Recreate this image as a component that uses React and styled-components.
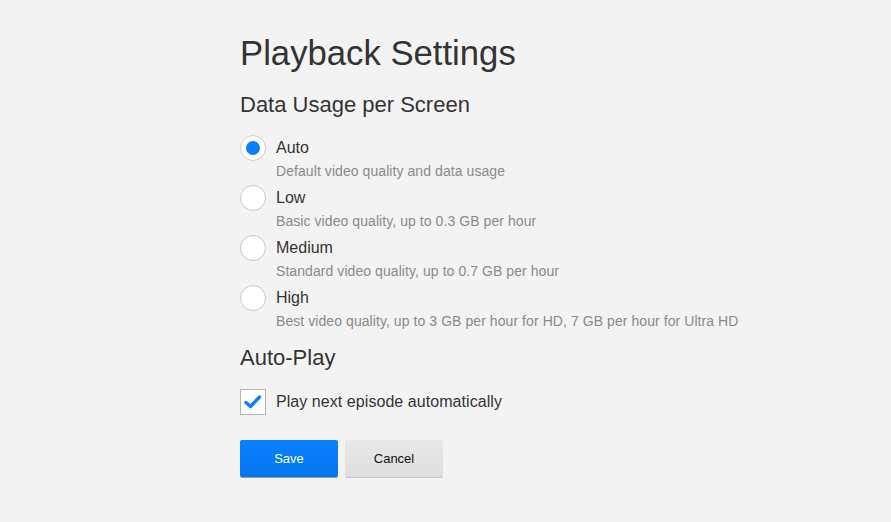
import React, { useState } from "react";
import styled, { createGlobalStyle } from "styled-components";

const Global = createGlobalStyle`
  html, body {
    margin: 0;
    padding: 0;
    background: #f3f3f3;
  }
  body {
    font-family: "Liberation Sans", Arial, sans-serif;
    color: #333;
  }
`;

const Page = styled.div`
  min-height: 522px;
  box-sizing: border-box;
  padding: 32px 0 0 240px;
  display: flex;
  flex-direction: column;
  align-items: flex-start;
`;

const Title = styled.h1`
  margin: 0 0 18px;
  font-size: 34.7px;
  line-height: 42px;
  font-weight: 400;
  color: #333;
`;

const SectionTitle = styled.h2`
  margin: ${(p) => p.$top || 0}px 0 ${(p) => p.$bottom || 0}px;
  font-size: 22px;
  line-height: 26px;
  font-weight: 400;
  color: #333;
`;

const OptionList = styled.div`
  display: flex;
  flex-direction: column;
  gap: 4px;
`;

const Option = styled.label`
  display: grid;
  grid-template-columns: 26px auto;
  column-gap: 10px;
  cursor: pointer;
`;

const Radio = styled.span`
  width: 26px;
  height: 26px;
  box-sizing: border-box;
  border-radius: 50%;
  background: #fff;
  border: 1px solid ${(p) => (p.$checked ? "#d6cbcb" : "#c8c8c8")};
  display: flex;
  align-items: center;
  justify-content: center;
  &::after {
    content: "";
    width: 14px;
    height: 14px;
    border-radius: 50%;
    background: ${(p) => (p.$checked ? "#0a80ff" : "transparent")};
  }
`;

const OptionText = styled.div`
  display: flex;
  flex-direction: column;
`;

const OptionLabel = styled.span`
  font-size: 16px;
  line-height: 26px;
  color: #333;
`;

const OptionDesc = styled.span`
  font-size: 14px;
  line-height: 20px;
  letter-spacing: 0.07px;
  color: #8a8a8a;
  white-space: nowrap;
`;

const CheckRow = styled.label`
  display: flex;
  align-items: center;
  gap: 10px;
  cursor: pointer;
`;

const CheckBox = styled.span`
  width: 26px;
  height: 26px;
  box-sizing: border-box;
  background: #fff;
  border: 1px solid #b5b5b5;
  display: flex;
  align-items: center;
  justify-content: center;
`;

const CheckText = styled.span`
  font-size: 16px;
  line-height: 26px;
  letter-spacing: 0.06px;
  color: #333;
`;

const Actions = styled.div`
  display: flex;
  gap: 7px;
  margin-top: 25px;
`;

const Button = styled.button`
  width: 98px;
  height: 37px;
  border: none;
  border-radius: 2px;
  font-family: "Liberation Sans", Arial, sans-serif;
  font-size: 13px;
  cursor: pointer;
  color: ${(p) => (p.$primary ? "#fff" : "#111")};
  background: ${(p) =>
    p.$primary
      ? "linear-gradient(#0a80ff, #0377ec)"
      : "linear-gradient(#e8e8e8, #dedede)"};
  box-shadow: 0 1px 0 rgba(0, 0, 0, ${(p) => (p.$primary ? 0.35 : 0.18)});
`;

const options = [
  { id: "auto", label: "Auto", desc: "Default video quality and data usage" },
  { id: "low", label: "Low", desc: "Basic video quality, up to 0.3 GB per hour" },
  { id: "medium", label: "Medium", desc: "Standard video quality, up to 0.7 GB per hour" },
  {
    id: "high",
    label: "High",
    desc: "Best video quality, up to 3 GB per hour for HD, 7 GB per hour for Ultra HD",
  },
];

export default function App() {
  const [sel, setSel] = useState("auto");
  const [auto, setAuto] = useState(true);
  return (
    <>
      <Global />
      <Page>
        <Title>Playback Settings</Title>
        <SectionTitle $bottom={17}>Data Usage per Screen</SectionTitle>
        <OptionList>
          {options.map((o) => (
            <Option key={o.id} onClick={() => setSel(o.id)}>
              <Radio $checked={sel === o.id} />
              <OptionText>
                <OptionLabel>{o.label}</OptionLabel>
                <OptionDesc>{o.desc}</OptionDesc>
              </OptionText>
            </Option>
          ))}
        </OptionList>
        <SectionTitle $top={14} $bottom={18}>Auto-Play</SectionTitle>
        <CheckRow onClick={() => setAuto(!auto)}>
          <CheckBox>
            {auto && (
              <svg width="20" height="20" viewBox="0 0 20 20">
                <path
                  d="M3 10.5 L7.5 14.5 L16.5 5"
                  fill="none"
                  stroke="#0a80ff"
                  strokeWidth="3.4"
                  strokeLinecap="round"
                  strokeLinejoin="round"
                />
              </svg>
            )}
          </CheckBox>
          <CheckText>Play next episode automatically</CheckText>
        </CheckRow>
        <Actions>
          <Button $primary>Save</Button>
          <Button>Cancel</Button>
        </Actions>
      </Page>
    </>
  );
}
